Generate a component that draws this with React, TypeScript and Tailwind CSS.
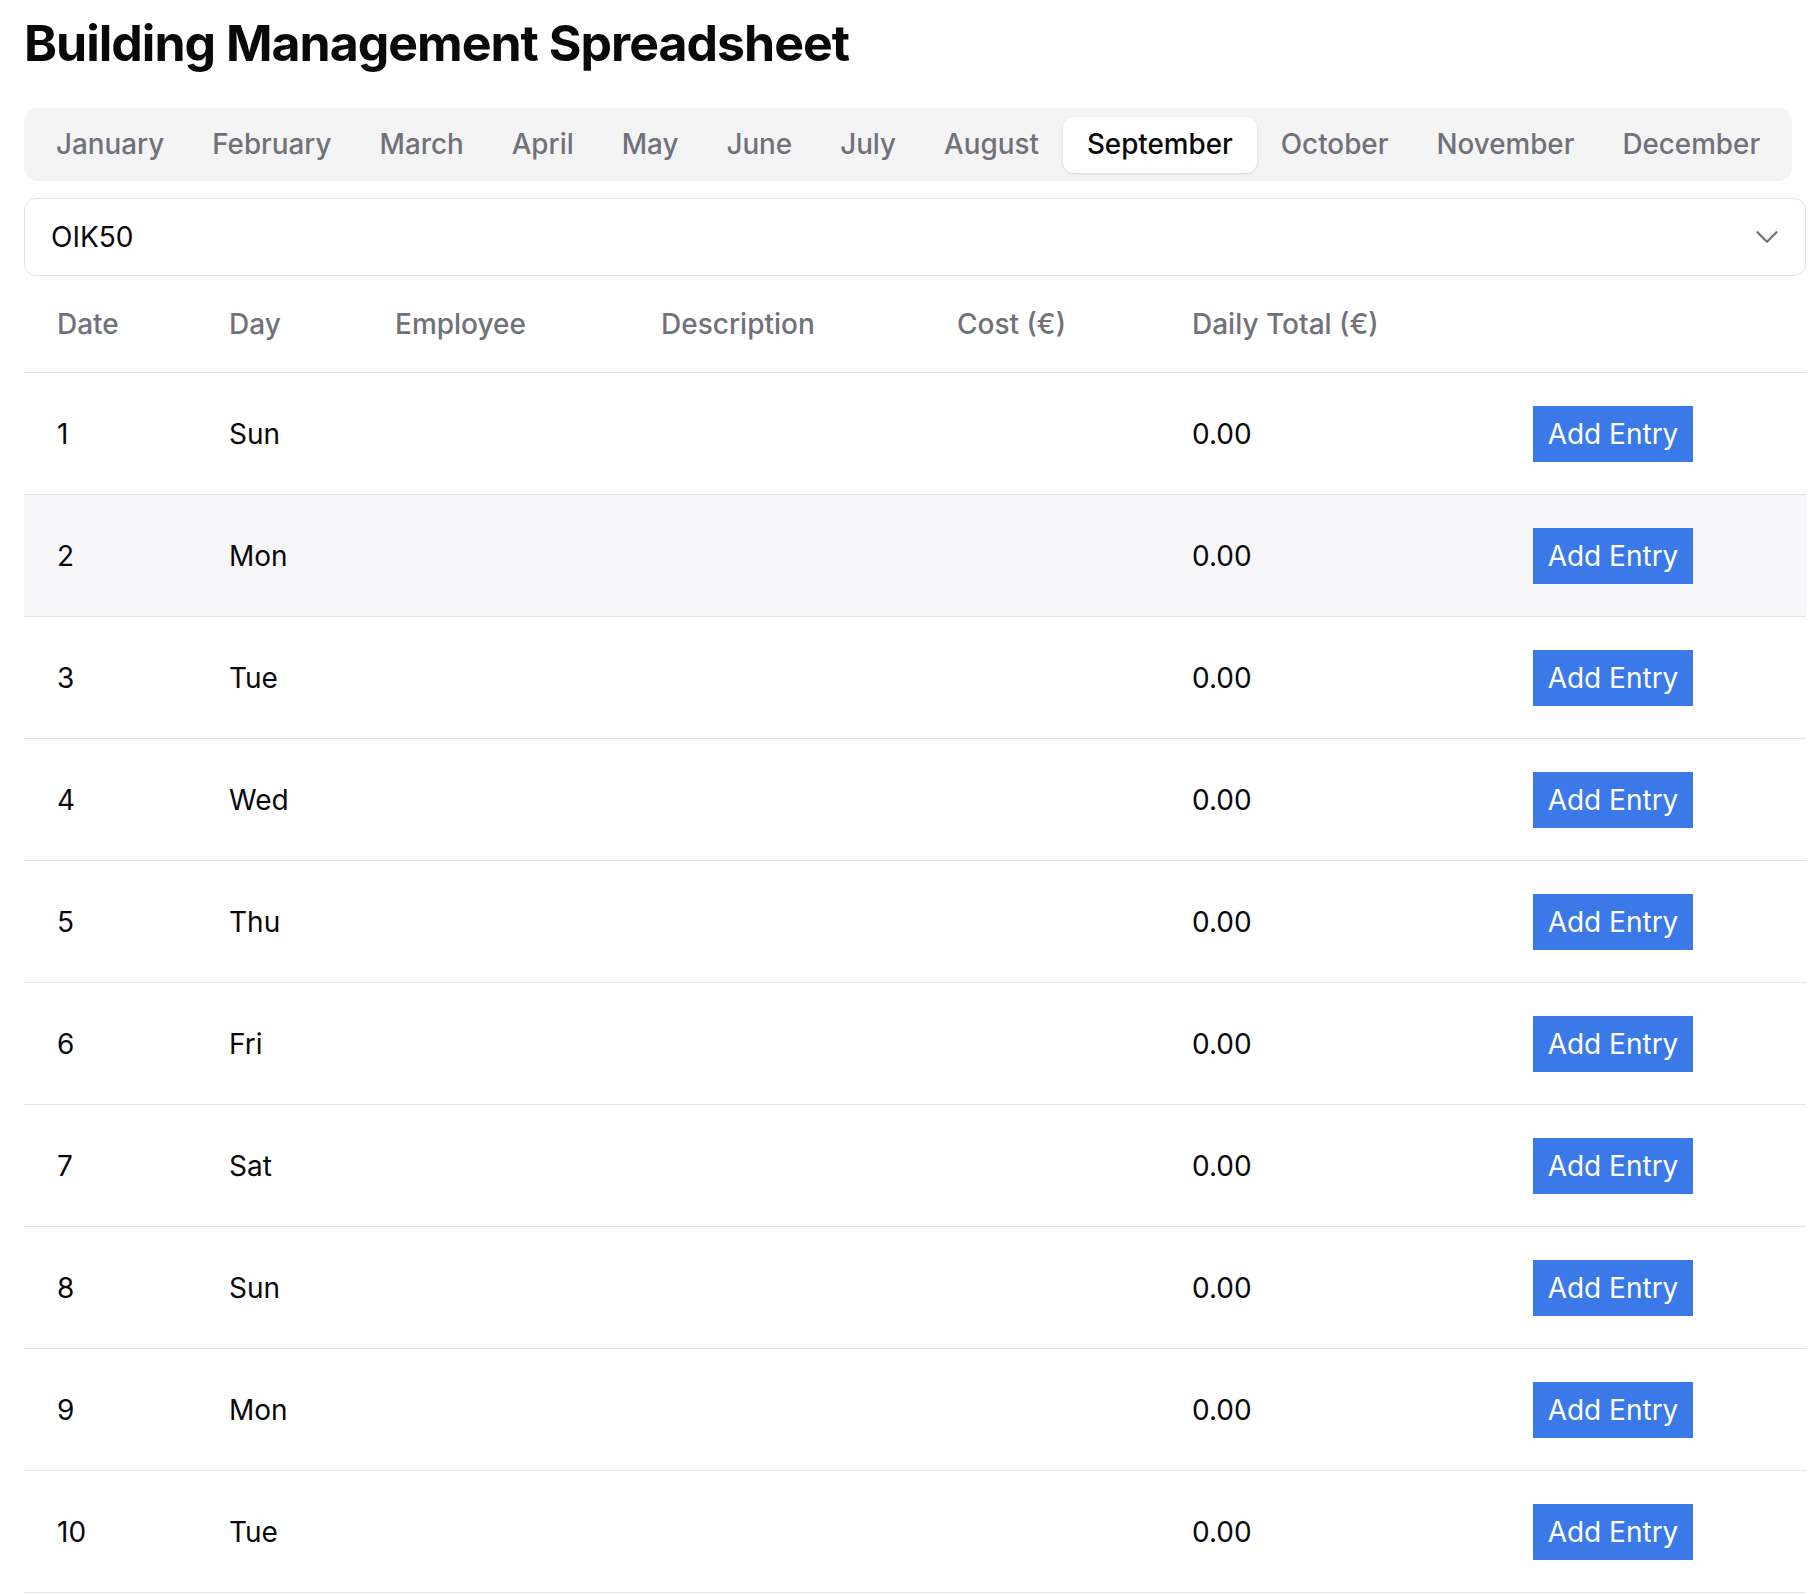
import React from 'react';
import { ChevronDown } from 'lucide-react';

const months = [
  'January', 'February', 'March', 'April', 'May', 'June',
  'July', 'August', 'September', 'October', 'November', 'December',
];

const dayNames = ['Sun', 'Mon', 'Tue', 'Wed', 'Thu', 'Fri', 'Sat'];

// September 2024 starts on a Sunday
const rows = Array.from({ length: 10 }, (_, i) => ({
  date: i + 1,
  day: dayNames[i % 7],
  total: '0.00',
}));

const cols = 'grid grid-cols-[172px_166px_266px_296px_235px_341px_1fr]';

const App: React.FC = () => {
  const active = 'September';

  return (
    <div className="min-h-screen bg-white pt-[18px] pl-6 font-['Inter',sans-serif] text-[#09090b]">
      <div className="w-[1782px]">
        <h1 className="text-[50px] font-bold leading-none tracking-[-0.02em] mb-[40px]">
          Building Management Spreadsheet
        </h1>

        {/* month tabs */}
        <div className="inline-flex h-[73px] items-center rounded-[14px] bg-[#f4f4f5] px-[8px] mb-[17px]">
          {months.map((m) => (
            <button
              key={m}
              className={
                m === active
                  ? 'h-[56px] rounded-[11px] bg-white px-[24px] text-[27.8px] font-medium text-[#09090b] shadow-[0_1px_3px_rgba(0,0,0,0.12)]'
                  : 'h-[56px] rounded-[11px] px-[24px] text-[27.8px] font-medium text-[#71717a]'
              }
            >
              {m}
            </button>
          ))}
        </div>

        {/* building select */}
        <div className="flex h-[78px] items-center justify-between rounded-[12px] border border-[#e4e4e7] pl-[26px] pr-[19px]">
          <span className="text-[28px]">OIK50</span>
          <ChevronDown size={38} strokeWidth={1.5} className="text-[#737373]" />
        </div>

        {/* table */}
        <div>
          <div className={`${cols} h-[97px] items-center border-b border-[#e4e4e7] text-[28px] font-medium text-[#71717a]`}>
            <div className="pl-[33px]">Date</div>
            <div className="pl-[33px]">Day</div>
            <div className="pl-[33px]">Employee</div>
            <div className="pl-[33px]">Description</div>
            <div className="pl-[33px]">Cost (€)</div>
            <div className="pl-[33px]">Daily Total (€)</div>
            <div />
          </div>

          {rows.map((r, i) => (
            <div
              key={r.date}
              className={`${cols} h-[122px] items-center border-b border-[#e4e4e7] text-[28px] ${i === 1 ? 'bg-[#f7f7f9]' : ''}`}
            >
              <div className="pl-[33px]">{r.date}</div>
              <div className="pl-[33px]">{r.day}</div>
              <div className="pl-[33px]" />
              <div className="pl-[33px]" />
              <div className="pl-[33px]" />
              <div className="pl-[33px]">{r.total}</div>
              <div className="pl-[33px]">
                <button className="h-[56px] w-[160px] bg-[#3b78e8] text-[28px] text-white">
                  Add Entry
                </button>
              </div>
            </div>
          ))}
        </div>
      </div>
    </div>
  );
};

export default App;
